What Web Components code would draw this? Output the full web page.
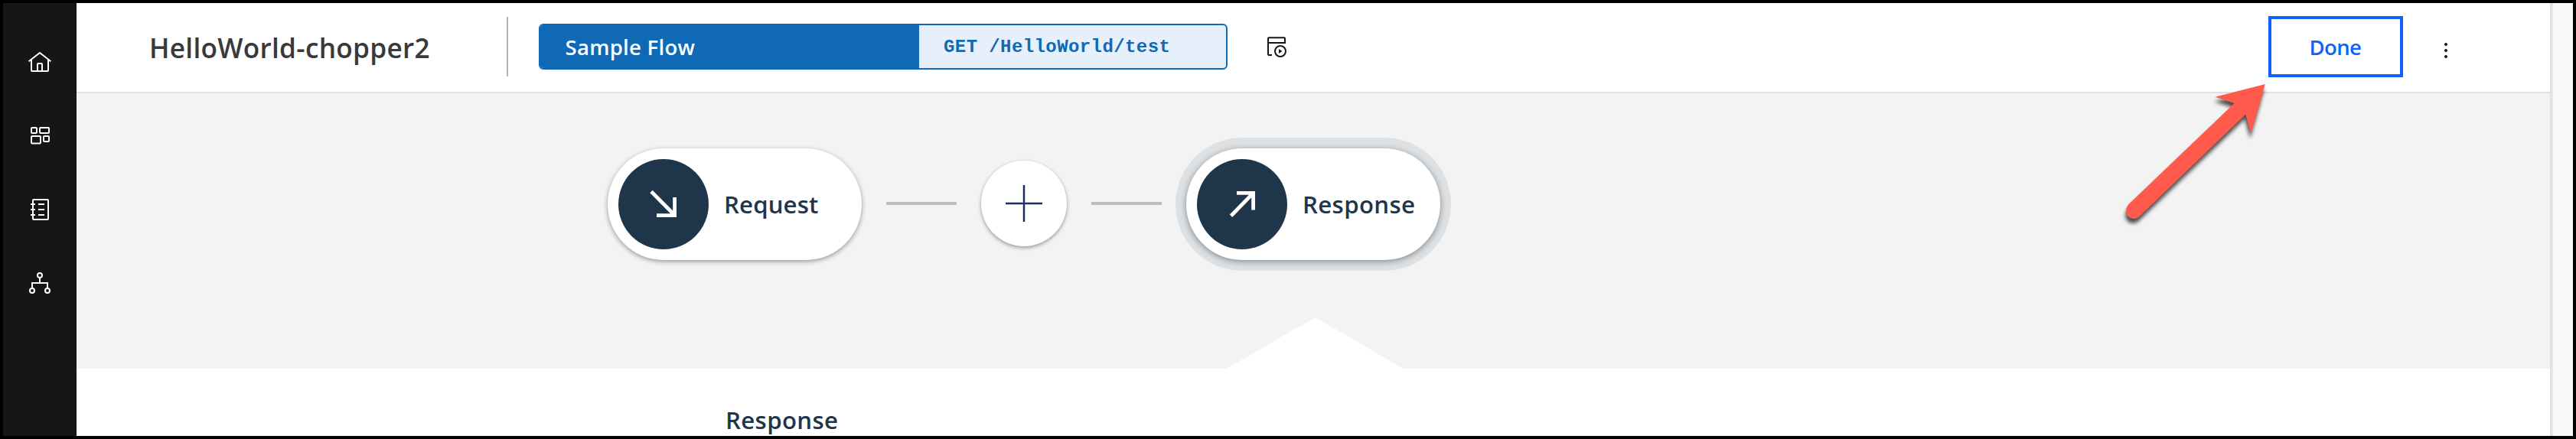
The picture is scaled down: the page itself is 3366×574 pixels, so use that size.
<!DOCTYPE html>
<html lang="en">
<head>
<meta charset="utf-8">
<title>HelloWorld-chopper2</title>
<style>
html,body{margin:0;height:100%;background:#000}
body{font-family:"Open Sans","Noto Sans",sans-serif;overflow:hidden}
</style>
</head>
<body>
<flow-app></flow-app>
<script>
const define = (name, html, init) => customElements.define(name, class extends HTMLElement {
  constructor() {
    super();
    this.attachShadow({mode: 'open'}).innerHTML = html;
  }
  connectedCallback() { if (init) init(this, this.shadowRoot); }
});

// A single-line label whose letters are tracked to fill a given ink width.
define('tracked-label', `<style>:host{display:block;white-space:pre;flex:none;font-weight:650}</style><slot></slot>`, el => {
  const fit = () => {
    const cs = getComputedStyle(el), text = el.textContent, target = +el.getAttribute('ink');
    const ctx = document.createElement('canvas').getContext('2d');
    ctx.font = `${cs.fontWeight} ${cs.fontSize} ${cs.fontFamily}`;
    const m = ctx.measureText(text);
    const ink = m.actualBoundingBoxLeft + m.actualBoundingBoxRight;
    el.style.letterSpacing = (target - ink) / (text.length - 1) + 'px';
    el.style.marginLeft = m.actualBoundingBoxLeft + 'px';
    el.style.width = target + 'px';
  };
  fit();
});

define('side-rail', `<style>
:host{display:flex;flex-direction:column;align-items:center;gap:64px;box-sizing:border-box;width:96px;padding-top:62px;background:#161616}
svg{display:block;width:32px;height:32px;fill:none;stroke:#fff;stroke-width:2;flex:none}
</style>
<svg viewBox="0 0 32 32"><path fill="#fff" stroke="none" d="M16.6123,2.2138a1.01,1.01,0,0,0-1.2427,0L1,13.4194l1.2427,1.5717L4,13.6208V26a2.0041,2.0041,0,0,0,2,2H26a2.0037,2.0037,0,0,0,2-2V13.63L29.7573,15,31,13.4282ZM18,26H14V18h4Zm2,0V18a2.0023,2.0023,0,0,0-2-2H14a2.002,2.002,0,0,0-2,2v8H6V12.0615l10-7.79,10,7.8005V26Z"/></svg>
<svg viewBox="0 0 32 32"><rect x="5" y="5" width="7" height="7" rx="1"/><rect x="16" y="5" width="12" height="7" rx="1"/><rect x="5" y="16" width="12" height="9.5" rx="1"/><rect x="21" y="16" width="7" height="7" rx="1"/></svg>
<svg viewBox="0 0 32 32"><rect x="7" y="3" width="20" height="26" rx="1"/><path d="M4 9h6M4 16h6M4 23h6M14 9h8M14 16h8M14 23h8"/></svg>
<svg viewBox="0 0 32 32"><circle cx="16" cy="6" r="3"/><circle cx="6" cy="26" r="3"/><circle cx="26" cy="26" r="3"/><path d="M16 9v7M6 23v-7h20v7"/></svg>`);

define('flow-pill', `<style>
:host{display:flex;box-sizing:border-box;width:900px;height:60px;border:2px solid #0f69b4;border-radius:6px;overflow:hidden;background:#e6f0fa;flex:none}
div{display:flex;align-items:center;box-sizing:border-box}
.name{width:495px;background:#0f69b4;color:#fff;padding-left:33.5px;font-size:27.5px}
.path{padding-left:32px;color:#0f69b4;font:bold 24px "Liberation Mono",monospace}
</style><div class="name"><slot name="name"></slot></div><div class="path"><slot name="path"></slot></div>`);

define('app-header', `<style>
:host{display:flex;align-items:center;box-sizing:border-box;height:118px;background:#fff;border-bottom:2px solid #e0e0e0}
.title{width:562px;box-sizing:border-box;padding:0 0 1px 98px;color:#393939;font-size:35.2px}
.rule{width:2px;height:78px;background:#aab8bb;margin:-2px 40px 0 0}
flow-pill{margin-top:-2px}
.path{font-weight:700}
svg{display:block;flex:none}
.insp{margin-left:50px}
button{margin:-2px 0 0 auto;box-sizing:border-box;width:176px;height:80px;border:4px solid #0f62fe;border-radius:0;background:#fff;color:#0f62fe;padding:0 0 0 51.5px;font-family:inherit;font-size:27.5px;display:flex;align-items:center}
.dots{margin:8px 120px 0 40px}
</style>
<div class="title"><tracked-label ink="362.5">HelloWorld-chopper2</tracked-label></div>
<div class="rule"></div>
<flow-pill><tracked-label slot="name" ink="169">Sample Flow</tracked-label><tracked-label class="path" slot="path" ink="294.5">GET /HelloWorld/test</tracked-label></flow-pill>
<svg class="insp" width="32" height="32" viewBox="0 0 32 32" fill="none" stroke="#161616" stroke-width="2"><path d="M3 10V4.2a1 1 0 0 1 1-1h20a1 1 0 0 1 1 1V10H3V25a1 1 0 0 0 1 1H8"/><circle cx="19" cy="21" r="7"/><path fill="#161616" stroke="none" d="M17 18v6l4.5-3z"/></svg>
<button><tracked-label ink="65.5">Done</tracked-label></button>
<svg class="dots" width="32" height="32" viewBox="0 0 32 32" fill="#161616"><circle cx="16" cy="8" r="2"/><circle cx="16" cy="16" r="2"/><circle cx="16" cy="24" r="2"/></svg>`);

define('flow-node', `<style>
:host{display:flex;align-items:center;box-sizing:border-box;width:332px;height:146px;border-radius:73px;padding-left:14px;background:#fff;color:#1f364a;font-size:31.2px;box-shadow:0 2px 6px rgba(0,0,0,.38);flex:none}
:host([selected]){box-shadow:0 2px 8px rgba(0,0,0,.4),0 0 0 14px #dde1e4}
.disc{width:118px;height:118px;border-radius:50%;background:#1f364a;margin-right:22px;flex:none}
.disc ::slotted(svg){display:block}
</style><div class="disc"><slot name="icon"></slot></div><slot></slot>`);

define('flow-link', `<style>:host{display:block;width:92px;height:4px;margin:-2px 32px 0;background:#bebebe;flex:none}</style>`);

define('add-step', `<style>
:host{display:block;width:112px;height:112px;border-radius:50%;background:#fff;box-shadow:0 2px 5px rgba(0,0,0,.38);flex:none;margin-top:-2px}
svg{display:block}
</style><svg width="112" height="112" viewBox="0 0 112 112" stroke="#1b3058"><path stroke-width="3.4" stroke-opacity=".35" d="M56 32V80M32 56H80"/><path stroke-width="2" d="M56 32V80M32 56H80"/></svg>`);

define('flow-canvas', `<style>
:host{display:flex;flex-direction:column;height:360px;background:#f3f3f3}
.row{display:flex;align-items:center;height:146px;padding:72px 0 0 694px}
.notch{width:231px;height:67px;margin:75px 0 0 1503px;background:#fff;clip-path:polygon(50% 0,100% 100%,0 100%)}
</style>
<div class="row">
<flow-node><svg slot="icon" width="118" height="118" viewBox="0 0 118 118" fill="none" stroke="#fff" stroke-width="4.8"><path d="M43 42.5L74 73.8M73.6 50V73.6H50"/></svg><tracked-label ink="121">Request</tracked-label></flow-node>
<flow-link></flow-link><add-step></add-step><flow-link></flow-link>
<flow-node selected><svg slot="icon" width="118" height="118" viewBox="0 0 118 118" fill="none" stroke="#fff" stroke-width="4.8"><path d="M44.5 74.2L74 44M52 44.4H73.6V66.5"/></svg><tracked-label ink="144">Response</tracked-label></flow-node>
</div><div class="notch"></div>`);

define('detail-panel', `<style>
:host{display:block;flex:1;background:#fff;color:#1f364a;font-size:31.2px;padding:49px 0 0 850px;overflow:hidden}
tracked-label{line-height:37px}
</style><tracked-label ink="144">Response</tracked-label>`);

// Callout arrow that lies over the header and the canvas.
define('callout-arrow', `<style>
:host{position:absolute;left:2756px;top:92px;width:220px;height:210px;pointer-events:none}
svg{display:block;filter:drop-shadow(-1px 6px 2.5px rgba(0,0,0,.68))}
</style><svg width="220" height="210" viewBox="2760 96 220 210"><path fill="#ff5a4c" d="M2959.8 110L2894.5 126.7L2919.6 135L2782 266.5C2777 272 2777 279 2781 283C2785 287 2792 287 2796 282.5L2934.3 149.5L2941.3 175Z"/></svg>`);

define('flow-app', `<style>
:host{display:flex;position:relative;box-sizing:border-box;width:3366px;height:574px;border:4px solid #000;overflow:hidden;background:#fff}
main{display:flex;flex-direction:column;width:3232px;flex:none}
aside{box-sizing:border-box;flex:1;background:#fafafa;border-left:2px solid #dfdfdf;box-shadow:inset 2px 0 #e8e8e8}
</style>
<side-rail></side-rail>
<main><app-header></app-header><flow-canvas></flow-canvas><detail-panel></detail-panel></main>
<aside></aside>
<callout-arrow></callout-arrow>`);
</script>
</body>
</html>
